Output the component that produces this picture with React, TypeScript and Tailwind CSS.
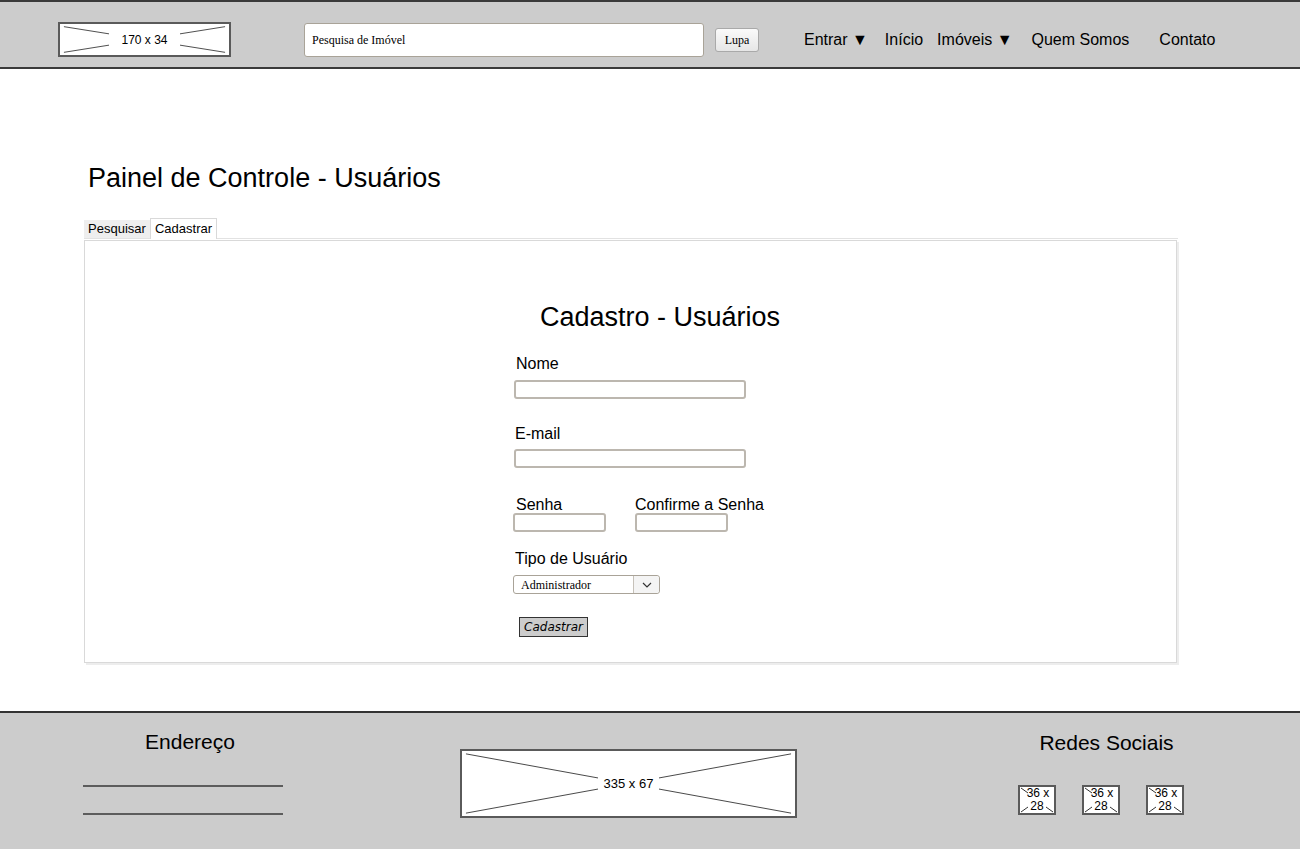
import React from "react";

const sans = { fontFamily: '"Liberation Sans", Arial, sans-serif' };

interface PlaceholderProps {
  w: number;
  h: number;
  label: string;
  className: string;
  textClass: string;
}

// wireframe image box: two diagonals broken by the size label
const Placeholder: React.FC<PlaceholderProps> = ({ w, h, label, className, textClass }) => {
  return (
    <div className={`relative flex items-center justify-center border-2 border-[#5a5a5a] bg-white ${className}`}>
      <svg className="absolute inset-0 h-full w-full" viewBox={`0 0 ${w} ${h}`} preserveAspectRatio="none">
        <line x1="4" y1="3" x2={w - 4} y2={h - 3} stroke="#444" strokeWidth="1" />
        <line x1={w - 4} y1="3" x2="4" y2={h - 3} stroke="#444" strokeWidth="1" />
      </svg>
      <span className={`relative bg-white text-black ${textClass}`}>{label}</span>
    </div>
  );
};

const SocialIcon = () => (
  <div className="relative flex h-[30px] w-[38px] flex-col items-center justify-between border-2 border-[#5a5a5a] bg-white text-[12px] leading-[13px] text-black">
    <svg className="absolute inset-0 h-full w-full" viewBox="0 0 34 26">
      <line x1="1" y1="1" x2="8" y2="6" stroke="#333" strokeWidth="1" />
      <line x1="1" y1="25" x2="8" y2="20" stroke="#333" strokeWidth="1" />
      <line x1="33" y1="25" x2="26" y2="20" stroke="#333" strokeWidth="1" />
    </svg>
    <span className="relative pl-[2px]">36 x</span>
    <span className="relative">28</span>
  </div>
);

const TextInput: React.FC<{ className: string }> = ({ className }) => (
  <div className={`h-[19px] rounded-[3px] border-2 border-[#bcb7af] bg-white ${className}`} />
);

export default function App() {
  return (
    <div className="flex min-h-[850px] w-[1300px] flex-col bg-white text-black" style={sans}>
      {/* header */}
      <header className="flex h-[69px] items-center border-t-2 border-b-2 border-[#3a3a3a] bg-[#cccccc] pt-[10px] pl-[58px]">
        <Placeholder w={172} h={35} label="170 x 34" className="h-[35px] w-[173px]" textClass="px-[12px] text-[12px]" />
        <div
          className="ml-[73px] flex h-[34px] w-[400px] items-center rounded-[3px] border border-[#a9a398] bg-white pl-[7px] text-[12px]"
          style={{ fontFamily: '"Liberation Serif", "Times New Roman", serif' }}
        >
          Pesquisa de Imóvel
        </div>
        <button
          className="ml-[11px] flex h-[24px] w-[44px] items-center justify-center rounded-[3px] border border-[#a9a9a9] bg-gradient-to-b from-[#fafafa] to-[#e6e6e6] text-[12px]"
          style={{ fontFamily: '"Liberation Serif", "Times New Roman", serif' }}
        >
          Lupa
        </button>
        <nav className="flex items-center text-[16px]">
          <span className="ml-[45px]">Entrar ▼</span>
          <span className="ml-[17px]">Início</span>
          <span className="ml-[14px]">Imóveis ▼</span>
          <span className="ml-[19px]">Quem Somos</span>
          <span className="ml-[30px]">Contato</span>
        </nav>
      </header>

      {/* main */}
      <main className="flex flex-col pt-[93px] pb-[48px] pl-[84px]">
        <h1 className="pl-[4px] text-[27px] leading-[32px]">Painel de Controle - Usuários</h1>

        <div className="mt-[25px] flex h-[20px] w-[1094px] items-end border-b border-[#e2e2e2]">
          <div className="flex h-[18px] w-[66px] items-center justify-center bg-[#eeeeee] text-[13px]">Pesquisar</div>
          <div className="-mb-px flex h-[21px] w-[67px] items-center justify-center border border-b-0 border-[#d9d9d9] bg-white text-[13px]">
            Cadastrar
          </div>
        </div>

        <section className="mt-px flex h-[423px] w-[1093px] flex-col border border-[#d9d9d9] bg-white pt-[60px] shadow-[2px_2px_0_#ededed]">
          <h2 className="pl-[455px] text-[27px] leading-[32px]">Cadastro - Usuários</h2>

          <div className="flex flex-col pl-[429px]">
            <label className="mt-[21px] pl-[2px] text-[16px] leading-[20px]">Nome</label>
            <TextInput className="mt-[6px] w-[232px]" />

            <label className="mt-[25px] pl-[1px] text-[16px] leading-[20px]">E-mail</label>
            <TextInput className="mt-[5px] w-[232px]" />

            <div className="mt-[27px] flex">
              <div className="flex w-[121px] flex-col">
                <label className="pl-[2px] text-[16px] leading-[20px]">Senha</label>
                <TextInput className="-mt-[2px] -ml-px w-[93px]" />
              </div>
              <div className="flex flex-col">
                <label className="text-[16px] leading-[20px]">Confirme a Senha</label>
                <TextInput className="-mt-[2px] w-[93px]" />
              </div>
            </div>

            <label className="mt-[17px] pl-[1px] text-[16px] leading-[20px]">Tipo de Usuário</label>
            <div
              className="-ml-px mt-[6px] flex h-[19px] w-[147px] items-center rounded-[3px] border border-[#a9a398] bg-white text-[12px]"
              style={{ fontFamily: '"Liberation Serif", "Times New Roman", serif' }}
            >
              <span className="flex-1 pl-[7px]">Administrador</span>
              <span className="flex h-full w-[26px] items-center justify-center rounded-r-[3px] border-l border-[#c6c1b9] bg-[#f4f4f4]">
                <svg width="10" height="6" viewBox="0 0 10 6">
                  <path d="M1 1 L5 5 L9 1" fill="none" stroke="#333" strokeWidth="1.2" />
                </svg>
              </span>
            </div>

            <button
              className="mt-[23px] ml-[5px] flex h-[20px] w-[69px] items-center justify-center border border-[#333] bg-[#cccccc] text-[12px] italic"
              style={{ fontFamily: '"Comic Sans MS", "DejaVu Sans", sans-serif' }}
            >
              Cadastrar
            </button>
          </div>
        </section>
      </main>

      {/* footer */}
      <footer className="flex h-[138px] border-t-2 border-[#333] bg-[#cccccc]">
        <div className="ml-[83px] flex w-[200px] flex-col pt-[16px]">
          <div className="pl-[14px] text-center text-[21px] leading-[26px]">Endereço</div>
          <div className="mt-[30px] h-0 border-t-2 border-[#5c5c5c]" />
          <div className="mt-[26px] h-0 border-t-2 border-[#5c5c5c]" />
        </div>

        <div className="ml-[177px] pt-[36px]">
          <Placeholder w={337} h={68} label="335 x 67" className="h-[69px] w-[337px]" textClass="px-[6px] text-[13px]" />
        </div>

        <div className="ml-[221px] flex w-[166px] flex-col pt-[17px]">
          <div className="pl-[11px] text-center text-[21px] leading-[26px]">Redes Sociais</div>
          <div className="mt-[29px] flex gap-[26px]">
            <SocialIcon />
            <SocialIcon />
            <SocialIcon />
          </div>
        </div>
      </footer>
    </div>
  );
}
